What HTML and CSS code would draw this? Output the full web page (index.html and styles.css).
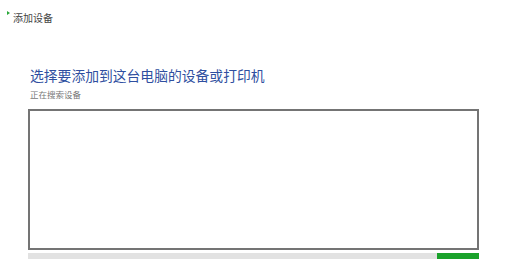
FILE: index.html
```html
<!DOCTYPE html>
<html lang="zh-CN">
<head>
  <meta charset="UTF-8">
  <title>添加设备</title>
  <link rel="stylesheet" href="styles.css">
</head>
<body>
  <div class="header">
    <span class="back"></span>
    <span class="caption">添加设备</span>
  </div>
  <div class="main">
    <h1 class="title">选择要添加到这台电脑的设备或打印机</h1>
    <div class="status">正在搜索设备</div>
    <div class="list"></div>
    <div class="footer">
      <div class="progress"></div>
      <div class="btn"></div>
    </div>
  </div>
</body>
</html>
```

FILE: styles.css
```css
html, body {
  margin: 0;
  padding: 0;
  background: #fff;
  overflow: hidden;
  font-family: "Noto Sans CJK SC", "Liberation Sans", sans-serif;
}
.header {
  display: flex;
  align-items: flex-start;
  padding: 10px 0 0 7px;
  height: 46px;
  box-sizing: border-box;
}
.back {
  width: 0;
  height: 0;
  border-top: 2px solid transparent;
  border-bottom: 2px solid transparent;
  border-left: 3px solid #2aa83a;
  margin-top: 1px;
}
.caption {
  font-size: 10px;
  line-height: 12px;
  color: #444;
  margin-left: 3px;
  margin-top: 2px;
}
.main {
  padding-left: 28px;
  width: 451px;
}
.title {
  margin: 0 0 0 2px;
  font-size: 13.8px;
  line-height: 20px;
  font-weight: normal;
  color: #2f4fa0;
  padding-top: 19px;
}
.status {
  margin-left: 2px;
  font-size: 8.5px;
  line-height: 12px;
  color: #777;
  margin-top: 3px;
}
.list {
  margin-top: 9px;
  height: 137px;
  border: 2px solid #747474;
  background: #fff;
}
.footer {
  display: flex;
  margin-top: 3px;
  height: 8px;
}
.progress {
  flex: 1;
  background: #e2e2e2;
}
.btn {
  width: 42px;
  background: #1aa22b;
}
```
